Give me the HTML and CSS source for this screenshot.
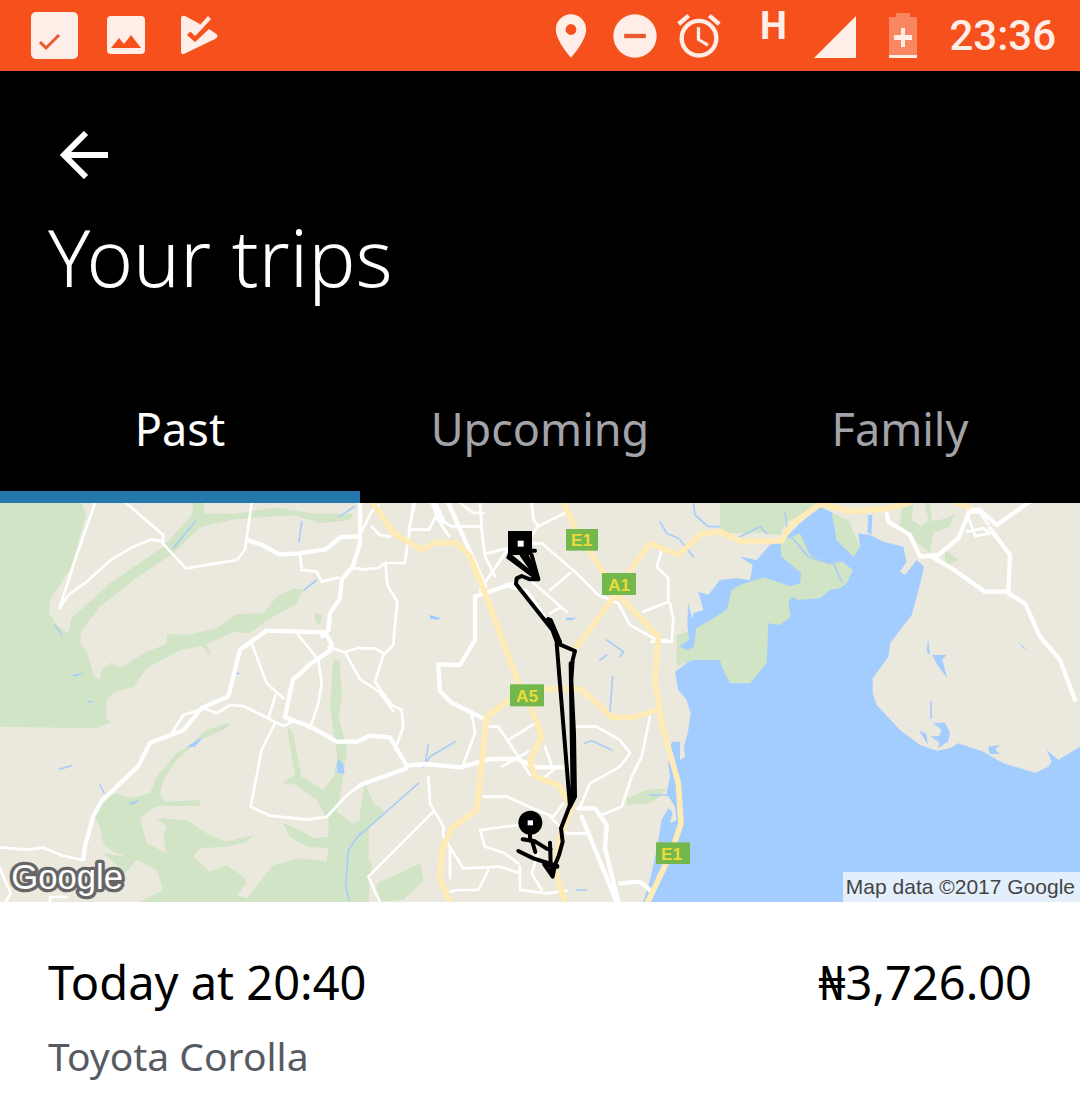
FILE: index.html
```html
<!DOCTYPE html>
<html lang="en">
<head>
<meta charset="utf-8">
<meta name="viewport" content="width=device-width, initial-scale=1">
<title>Your trips</title>
<link rel="stylesheet" href="styles.css">
</head>
<body>
<div class="status">
  <div class="status-group status-left">
    <svg class="icon" viewBox="0 0 52 52" aria-hidden="true"><rect x="3" y="2" width="47" height="47" rx="5" fill="#ffede8"/><path d="M12 32l6 6 13-13" fill="none" stroke="#e85a30" stroke-width="3"/></svg>
    <svg class="icon" viewBox="0 0 52 52" aria-hidden="true"><path fill="#ffede8" fill-rule="evenodd" d="M11 6h30a4 4 0 0 1 4 4v30a4 4 0 0 1-4 4H11a4 4 0 0 1-4-4V10a4 4 0 0 1 4-4zM11 38h30L31 25l-7 9-5-6z"/></svg>
    <svg class="icon" viewBox="0 0 52 52" aria-hidden="true"><path fill="#ffede8" d="M9 9q0-4 4-3l15 8-6 9-3-2-4 4 8 7 14-13 6 4q5 3 0 6L14 43q-5 3-5-2z"/><path fill="#ffede8" d="M16 9l12 6 8-9 3 3-16 18-6-5z"/><path fill="none" stroke="#f6511d" stroke-width="4" d="M17 23l6 6 14-14"/></svg>
  </div>
  <div class="status-group">
    <svg class="icon" viewBox="0 0 24 24" aria-hidden="true"><path fill="#ffede8" d="M12 2C8.130 2 5 5.130 5 9c0 5.250 7 13 7 13s7-7.750 7-13c0-3.870-3.130-7-7-7zm0 9.500a2.500 2.500 0 0 1 0-5 2.500 2.500 0 0 1 0 5z"/></svg>
    <svg class="icon" viewBox="0 0 24 24" aria-hidden="true"><circle cx="12" cy="12" r="10" fill="#ffede8"/><path fill="#e85a30" d="M7 11h10v2H7z"/></svg>
    <svg class="icon" viewBox="0 0 24 24" aria-hidden="true"><path fill="#ffede8" d="M22 5.720l-4.600-3.860-1.290 1.530 4.600 3.860L22 5.720zM7.880 3.390L6.600 1.860 2 5.710l1.290 1.530 4.590-3.850zM12.500 8H11v6l4.750 2.850.750-1.230-4-2.370V8zM12 4a9 9 0 1 0 0 18 9 9 0 0 0 0-18zm0 16a7 7 0 1 1 0-14 7 7 0 0 1 0 14z"/></svg>
    <svg class="icon-network" viewBox="0 0 128 70" role="img" aria-label="Mobile signal, H"><text class="network-type" x="23" y="38">H</text><path fill="#ffede8" d="M77 57h42V15z"/></svg>
    <svg class="icon" viewBox="0 0 52 52" aria-hidden="true"><path fill="#f98661" d="M19 3h14v4h7v38H12V7h7z"/><path fill="#ffede8" d="M12 45h28v3H12zM24 18h4v7h7v5h-7v7h-4v-7h-7v-5h7z"/></svg>
    <time class="clock">23:36</time>
  </div>
</div>

<header class="header">
  <button class="back" type="button" aria-label="Back">
    <svg viewBox="0 0 48 48" aria-hidden="true"><path d="M26 2L4 24l22 22M4 24h44" fill="none" stroke="#fff" stroke-width="6"/></svg>
  </button>
  <h1 class="title">Your trips</h1>
  <nav class="tabs">
    <a class="tab tab-active" href="#past" aria-current="page">Past</a>
    <a class="tab" href="#upcoming">Upcoming</a>
    <a class="tab" href="#family">Family</a>
  </nav>
</header>

<main id="past">
<article class="trip">
  <div class="map">
  <svg class="map-art" viewBox="0 9 3240 1197" role="img" aria-label="Map of the trip route">
    <rect class="land" y="9" width="3240" height="1197"/>

    <!-- parks -->
    <g class="park">
      <path d="M0 9H245L258 45 215 200 150 300 148 340 170 375 205 400 215 355 330 250 490 140 575 45 580 9H612L612 40 700 42 830 22 930 40 1060 42 1050 60 960 70 880 45 700 58 600 82 520 160 400 240 300 320 245 390 240 425 262 460 280 525 300 540 305 510 335 487 360 505 440 455 500 432 502 402 560 405 650 385 710 342 790 340 830 290 880 265 912 270 885 315 800 360 750 400 700 395 620 432 635 472 605 438 540 450 440 505 400 560 345 575 320 600 318 655 335 665 290 685 0 680z"/>
      <path d="M945 340l22 5-8 32-14-15zM1000 480l18 0 8 110-10 60 25 100-15 100-15 85 45 35 50-15V1206H420L490 1170 470 1110 410 1080 375 1120 310 1060 380 1070 340 1055 310 1030 300 980 280 945 310 900 345 880 390 895 450 880 470 830 530 760 570 735 620 690 690 668 680 685 600 720 530 780 490 840 480 880 495 905 600 900 598 918 470 918 420 955 440 1030 500 1060 490 1010 500 980 470 955 560 960 620 1000 680 1025 760 1005 740 1025 680 1040 600 1045 580 1070 630 1115 680 1095 730 1130 740 1150 710 1185 740 1195 780 1145 820 1095 900 1075 980 1085 985 1045 920 1040 870 1010 850 970 900 990 940 1015 985 1010 985 960 950 900 890 855 848 850 885 825 870 740 862 680 880 700 890 760 905 830 970 870 1000 830 1012 770 990 620z"/>
      <path d="M1080 940L1095 850 1120 910 1155 935 1080 1010zM1080 1060L1115 1090 1105 1206H1080zM1130 1150l70-30 60-30 10 50-60 60-80 5z"/>
      <path d="M1880 895l60-25 60-5-20 25-30 20-70 5zM2160 9h300l-40 35-60 20-20 40-60-5-60 0-60 0zM2710 9h30l-5 50 30 20 20-20-10-50h15l5 55 50-10 20-15-15 40-50 20-10 60-50-40-45-30z"/>
      <path d="M2835 150l20 15 20 15-30 15-10-15z"/>
    </g>

    <!-- lagoon and inlets -->
    <g class="water">
      <path d="M1930 1206L1950 1140 1970 1050 1985 960 2005 925 2018 935 2010 970 2030 960 2025 920 2000 880 2010 830 2005 790 2015 725 2040 725 2040 780 2055 770 2052 740 2065 690 2072 640 2060 600 2035 570 2025 515 2060 490 2080 340 2110 330 2095 275 2125 285 2160 240 2210 235 2250 240 2258 195 2220 170 2270 180 2310 135 2350 120 2400 70 2460 20 2500 40 2510 120 2560 170 2580 140 2575 100 2610 105 2650 125 2710 140 2720 185 2700 215 2715 225 2750 180 2772 200 2758 260 2735 345 2670 430 2665 470 2618 535 2618 580 2630 615 2700 690 2760 735 2810 752 2850 745 2875 730 2950 755 3010 790 3105 818 3145 800 3155 785 3140 750 3175 780 3240 740V1206z"/>
      <path d="M2800 668h35l15 30-5 25-30 22 2-18-25-18 25 0 8-18zM2757 692l22 10 5 32zM2780 455l4-40 6 50zM2797 465l42 0-12 15 15 55-30-40zM2965 740l35-5-15 12 14 15-30 0zM3056 426l28 28-20-15zM2605 45h12l-3 60-12-8zM1290 345l30 8-5 7-25-4z"/>
      <path d="M1015 775l15 20 4 25-22 0 0-25zM215 525l40-7-30 13zM260 603l25 0-15 6zM708 517l16 4-17 2zM560 740l50-30-25 30zM385 910l35-12-20 16zM1695 353l35 0-12 8-18 0z"/>
    </g>
    <g class="park">
      <path d="M2030 405L2080 390 2140 355 2180 330 2195 270 2220 255 2290 232 2370 258 2400 250 2403 220 2345 170 2340 125 2400 100 2430 165 2485 190 2520 180 2558 210 2540 250 2520 265 2490 270 2460 295 2395 300 2375 290 2365 310 2372 350 2340 375 2305 370 2300 490 2250 550 2190 550 2165 500 2160 480 2080 480 2030 500z"/>
      <path d="M2495 40l50 20 35 80-20 30-50-50z"/>
    </g>
    <g class="water">
      <path d="M2065 310l10 40 14 30-7 60-20 10-25-10 30-20-5-50z"/>
    </g>
    <g class="stream">
      <path d="M520 145L585 65M905 65l-8 60M912 270l38-30M165 375l20 30M180 807l35-10M300 855l12 24M1018 50l45-30M1080 1000l-35 50-8 110 10 40M1080 1005L1255 850M1270 800l20-30 75-45M1275 795l10-60M1830 635l8-105M1820 420l50 35-10 15M1800 480l20-15M1755 730l20-8 60 28M1980 65l20 35 35 15M2040 120l40 50M2080 10l5 35 40 35h35M2220 110l60-30 20 20M2355 40l10 60 60 70 60 20 90-18M2500 190l25 55M2793 605v50M1950 885l60 0M1960 1110l30-60M1730 1170l30 0"/>
    </g>

    <!-- local streets -->
    <g class="street">
      <path d="M285 9L225 180 178 325 205 285 260 245 335 178 400 140 455 118 490 125M378 9L490 105 488 130 558 205 710 180 735 150 755 9M900 160l5 50 45 5 15 30 50-12M755 430l45 120 50 45M895 405l60 75 10 70-10 60-25 75M805 655l22-70M515 700l35-55 65-20 35 15 40-25 40 3 90 45 30 15 30-15M825 670l-40 80-33 170 58 27 110 12 60-8 60-65 40-30 40-15M0 1042l80 7 50-6 60 25 60 12M0 1105l32 75-15 26M150 1206v-15h50M985 440l50 17 45-15M1035 457l45 80M1080 205h-20"/>
      <path d="M1080 105l35-70 20-20M1115 80l25 25 30 5M1245 9l-18 80 60 0 20-40 40 60M1240 9l-20 140-5 40-60 0-20 15-55 5M1157 195l5 60 30 50-8 80-4 50-30 30-25 80 50 70 30 15 5 50-25 70M1080 445h45l25 15M1080 538l55 35 45 60M1295 9l18 45 40 25h90M1380 9l40 30 30 0M1440 9l5 80 10 80 30 60M1595 9l5 50 15 20 80-40M1612 80l-30 50-120 30M1440 270l55-80 40-60 90 0 100 85 70 70 60 25 35 65 80 45h30M1650 270l60-50M1590 240l110 95M1650 340l35-20M1525 720l80-50M1450 680h45l60 90 35 55M1505 800l80-45M1635 740l25 70-25 20M1415 640l10 60-40 105M1730 680l60 0 70 40 30 40-30 40-90 50-30 70M1950 650l-25 120-30 60-30 90-60 25M1985 150l-15 50 35 35 0 70-75 30M2010 310l10 50-5 65h-60M1450 890h70l90 40 50 20 30-40M1440 990l90-12 80-5M1440 990l15 50 60 20 40 30M1285 830l5 80 40 70 0 30 60 95 110-5 60 20M1300 935L1105 1130l35 76M1465 1110l-30 60-60 0-25 5M1350 1040l0 95M1560 1100v70l80 10 60-8M1615 1060l-20 60 30 50M1650 950l50 50h60"/>
      <path d="M2900 95l50-10 20 15-45 8-25-70 40 0 25 35"/>
    </g>
    <!-- wider roads -->
    <g class="road">
      <path d="M742 120l45 15 50 28 60-3 80-12 45-37 58-2M1080 9V130l-22 70-33 40-5 55-30 45-5 50-18 18M250 1078l5-40 25-90 25-45 110-105 35-70 100-37 55-67 80-35 35-140 80-57 175 5 20 35-5 20-60 40-30 30-20 15-10 40-15 75 80 30 75 43h60l40-18 60 5 50 85 60-5 100 10 90-25h80l60 25h80"/>
      <path d="M1080 855l140-50M1345 9l80 180 30 70M1305 9l25 55M1540 250l-115 40 0 130-45 75-65-2 5 80 35 35 90 45M1520 255l60 20 50 70M1735 925l50 0 35 50-5 70 40 160M1745 950l105 256M1950 1170l-30-25-60 5"/>
      <path d="M2660 40l5 25 65 40 30 65 55-5 60-50 35-85 30 0 50 45 155-110M2970 85l60 80-5 115 50 30 45 100 60 70 45 120M2795 170l60 35 100 70 70 0"/>
    </g>

    <!-- highways -->
    <g class="highway">
      <path d="M1120 9l60 90 85 50 40-20h65l40 40 45 110 120 325M1590 610l35 100-35 70 15 50 70 25 40 65-35 90-15 100 30 96M1520 605l-60 45-10 100-20 180-75 55-30 65-5 90 30 66M1690 9l40 85 80 125M1730 440l120-160M1890 210l60-80 85 35 70-65 60-5M1630 567l110 0 60 50 35 35 65 0 65-20M1860 290l115 120-10 130 20 130 50 180 8 120-30 90-70 146"/>
      <path d="M2160 95l60 28h125l30-50 85-60 50 10 40 12 110-10 70-16M2870 9l35 12"/>
    </g>

    <!-- road shields -->
    <g class="shield">
      <rect x="1698" y="87" width="96" height="65"/><text x="1745" y="138">E1</text>
      <rect x="1806" y="219" width="102" height="66"/><text x="1857" y="273">A1</text>
      <rect x="1530" y="553" width="102" height="66"/><text x="1581" y="607">A5</text>
      <rect x="1968" y="1027" width="102" height="65"/><text x="2015" y="1081">E1</text>
    </g>

    <!-- trip route -->
    <g class="route">
      <path d="M1605 152h-45M1525 172L1600 228M1528 165L1615 238M1580 165L1605 225M1565 165L1600 215M1595 165L1615 238 1590 238 1565 228 1550 235 1548 252 1665 400 1680 430M1645 357L1672 430 1725 453 1718 480 1714 540 1722 700 1725 890 1710 920 1670 430M1652 360l28 65M1712 490l6 400"/>
      <path d="M1710 915L1683 985 1688 1025 1677 1065 1665 1095 1658 1130 1632 1092 1672 1100M1650 1028L1652 1090 1658 1125M1555 1053L1600 1075 1672 1098M1590 1000v22M1568 1018L1605 1024 1640 1046 1652 1048M1596 1022l10 34"/>
    </g>
    <rect x="1524" y="93" width="72" height="72"/><rect x="1553" y="122" width="18" height="18" fill="#fff"/>
    <circle cx="1591" cy="968" r="36"/><rect x="1583" y="961" width="16" height="15" fill="#fff"/>

    <text class="map-logo" x="34" y="1168">Google</text>
  </svg>
  <p class="map-credit">Map data ©2017 Google</p>
  </div>
  <div class="trip-info">
    <div class="trip-row"><h2 class="trip-text">Today at 20:40</h2><p class="trip-text">₦3,726.00</p></div>
    <p class="trip-car">Toyota Corolla</p>
  </div>
</article>
</main>
</body>
</html>
```
FILE: styles.css
```css
* { box-sizing: border-box; }

body {
  margin: 0;
  background: #fff;
  color: #000;
  font-family: "Noto Sans", "Open Sans", sans-serif;
}

h1, h2, p { margin: 0; }

/* status bar */
.status {
  display: flex;
  justify-content: space-between;
  align-items: center;
  height: 71px;
  padding: 0 24px 0 28px;
  background: #f6511d;
}
.status-group { display: flex; align-items: center; gap: 12px; }
.status-left { gap: 20px; }
.icon { display: block; width: 52px; height: 52px; }
.icon-network { display: block; width: 128px; height: 70px; }
.network-type { font: 700 38px Roboto, sans-serif; fill: #ffede8; }
.clock {
  margin-left: 8px;
  font: 500 42px/52px Roboto, sans-serif;
  color: #ffede8;
}

/* header */
.header {
  background: #000;
  color: #fff;
}
.back {
  display: block;
  margin: 0 36px;
  padding: 60px 24px 24px;
  border: 0;
  background: none;
  cursor: pointer;
}
.back svg { display: block; width: 48px; height: 48px; }
.title {
  padding: 0 48px;
  font-size: 79px;
  font-weight: 300;
  line-height: 108px;
}
.tabs {
  display: grid;
  grid-template-columns: repeat(3, 1fr);
  padding-top: 60px;
}
.tab {
  height: 132px;
  padding-top: 28px;
  border-bottom: 12px solid transparent;
  color: #a3a3aa;
  font-size: 45px;
  line-height: 60px;
  text-align: center;
  text-decoration: none;
}
.tab-active { border-color: #2578ac; color: #fff; }

/* map */
.map { position: relative; }
.map-art { display: block; width: 100%; height: auto; }
.land { fill: #ebe8dd; }
.park { fill: #d1e4c6; }
.water { fill: #a3ccff; }
.stream, .street, .road, .highway, .route {
  fill: none;
  stroke-linecap: round;
  stroke-linejoin: round;
}
.stream { stroke: #a9cdf8; stroke-width: 5; }
.street { stroke: #fff; stroke-width: 8; }
.road { stroke: #fff; stroke-width: 13; }
.highway { stroke: #ffebb5; stroke-width: 17; }
.route { stroke: #000; stroke-width: 12; }
.shield { fill: #74b74c; }
.shield text {
  fill: #eadb3a;
  font: 700 52px "Liberation Sans", sans-serif;
  text-anchor: middle;
}
.map-logo {
  fill: #fff;
  stroke: #666;
  stroke-width: 20px;
  stroke-linejoin: round;
  paint-order: stroke;
  font: 500 104px "Liberation Sans", sans-serif;
}
.map-credit {
  position: absolute;
  right: 0;
  bottom: 0;
  padding: 0 5px 0 3px;
  background: #e4effc;
  color: #444;
  font: 21px/30px "Liberation Sans", sans-serif;
}

/* trip summary */
.trip-info { padding: 50px 48px 36px; }
.trip-row { display: flex; justify-content: space-between; }
.trip-text {
  font-size: 47px;
  font-weight: 400;
  line-height: 60px;
}
.trip-car {
  margin-top: 16px;
  color: #565a63;
  font-size: 39px;
  line-height: 56px;
}
```
